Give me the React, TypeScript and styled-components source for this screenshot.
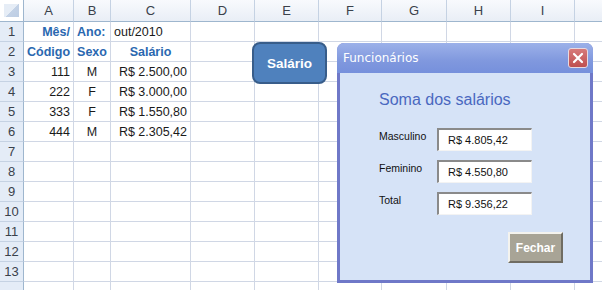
import styled, { createGlobalStyle } from 'styled-components';

const GlobalStyle = createGlobalStyle`
  html, body {
    margin: 0;
    padding: 0;
    background: #ffffff;
  }
  * {
    box-sizing: border-box;
  }
`;

const COLS = [24, 50, 37, 80, 64, 64, 63, 65, 64, 64, 64];
// the last column (J) is cut by the window, its letter falls outside
const LETTERS = ['A', 'B', 'C', 'D', 'E', 'F', 'G', 'H', 'I', ''];
const ROW_COUNT = 13;

type Align = 'left' | 'center' | 'right';

interface CellData {
  text: string;
  align?: Align;
  head?: boolean;
}

const data: Record<string, CellData> = {
  '1-0': { text: 'Mês/', align: 'right', head: true },
  '1-1': { text: 'Ano:', align: 'left', head: true },
  '1-2': { text: 'out/2010', align: 'left' },
  '2-0': { text: 'Código', align: 'center', head: true },
  '2-1': { text: 'Sexo', align: 'center', head: true },
  '2-2': { text: 'Salário', align: 'center', head: true },
  '3-0': { text: '111', align: 'right' },
  '3-1': { text: 'M', align: 'center' },
  '3-2': { text: 'R$ 2.500,00', align: 'right' },
  '4-0': { text: '222', align: 'right' },
  '4-1': { text: 'F', align: 'center' },
  '4-2': { text: 'R$ 3.000,00', align: 'right' },
  '5-0': { text: '333', align: 'right' },
  '5-1': { text: 'F', align: 'center' },
  '5-2': { text: 'R$ 1.550,80', align: 'right' },
  '6-0': { text: '444', align: 'right' },
  '6-1': { text: 'M', align: 'center' },
  '6-2': { text: 'R$ 2.305,42', align: 'right' },
};

const Page = styled.div`
  position: relative;
  width: 602px;
  height: 290px;
  overflow: hidden;
  font-family: 'Liberation Sans', Arial, sans-serif;
`;

const Sheet = styled.div`
  display: grid;
  grid-template-columns: ${COLS.map((c) => `${c}px`).join(' ')};
  grid-template-rows: 22px repeat(${ROW_COUNT + 1}, 20px);
`;

const Corner = styled.div`
  background: linear-gradient(135deg, #e6edf6 0%, #e6edf6 52%, #c3d2e6 52%, #b9cae2 100%);
  border-right: 1px solid #9eb6ce;
  border-bottom: 1px solid #9eb6ce;
  padding: 4px;
  background-clip: content-box;
  background-color: #dfe7f2;
`;

const ColHead = styled.div`
  display: flex;
  align-items: center;
  justify-content: center;
  background: linear-gradient(#f8fafd, #e9eef6);
  border-right: 1px solid #c5d2e3;
  border-bottom: 1px solid #9eb6ce;
  color: #3a414b;
  font-size: 13px;
`;

const RowHead = styled.div`
  display: flex;
  align-items: center;
  justify-content: center;
  background: #e4ecf7;
  border-right: 1px solid #9eb6ce;
  border-bottom: 1px solid #c5d2e3;
  color: #3a414b;
  font-size: 13px;
`;

const Cell = styled.div<{ $align: Align; $head: boolean }>`
  display: flex;
  align-items: center;
  justify-content: ${({ $align }) =>
    $align === 'right' ? 'flex-end' : $align === 'center' ? 'center' : 'flex-start'};
  padding: 0 3px;
  border-right: 1px solid #d0d7e5;
  border-bottom: 1px solid #d0d7e5;
  font-size: 12.5px;
  white-space: nowrap;
  overflow: visible;
  color: ${({ $head }) => ($head ? '#2a68b0' : '#1a1a1a')};
  font-weight: ${({ $head }) => ($head ? 700 : 400)};
`;

const ShapeButton = styled.div`
  position: absolute;
  left: 252px;
  top: 42px;
  width: 75px;
  height: 42px;
  display: flex;
  align-items: center;
  justify-content: center;
  background: #4f81bd;
  border: 2px solid #385d8a;
  border-radius: 8px;
  color: #ffffff;
  font-weight: 700;
  font-size: 13.5px;
`;

const Dialog = styled.div`
  position: absolute;
  left: 337px;
  top: 43px;
  width: 256px;
  height: 240px;
  display: flex;
  flex-direction: column;
  background: #6f78c8;
  border-radius: 7px 7px 0 0;
  padding: 0 3px 3px;
`;

const TitleBar = styled.div`
  height: 30px;
  display: flex;
  align-items: center;
  justify-content: space-between;
  margin: 0 -3px;
  padding: 0 5px 0 6px;
  border-radius: 7px 7px 0 0;
  background: linear-gradient(#9cb1e9, #8098de 60%, #7690dc);
  color: #ffffff;
  font-family: 'DejaVu Sans', Verdana, sans-serif;
  font-size: 12px;
`;

const CloseButton = styled.div`
  width: 20px;
  height: 20px;
  display: flex;
  align-items: center;
  justify-content: center;
  border: 1px solid #e8d9e0;
  border-radius: 3px;
  background: linear-gradient(#d77a7a, #bf4f4f);
`;

const Body = styled.div`
  flex: 1;
  display: flex;
  flex-direction: column;
  background: #d6e3f7;
  padding: 17px 27px 0 39px;
`;

const Heading = styled.div`
  color: #4a68c0;
  font-size: 16px;
  line-height: 20px;
  margin-bottom: 18px;
`;

const FieldList = styled.div`
  display: flex;
  flex-direction: column;
  gap: 9px;
`;

const FieldRow = styled.div`
  display: grid;
  grid-template-columns: 58px 95px;
  align-items: start;
`;

const Label = styled.div`
  font-size: 10.5px;
  color: #111111;
  padding-top: 2px;
`;

const ValueBox = styled.div`
  height: 23px;
  display: flex;
  align-items: center;
  padding-left: 9px;
  background: #ffffff;
  border-top: 2px solid #8a8a8a;
  border-left: 2px solid #8a8a8a;
  border-right: 1px solid #f3f3f3;
  border-bottom: 1px solid #f3f3f3;
  font-size: 11px;
  color: #111111;
`;

const Footer = styled.div`
  display: flex;
  justify-content: flex-end;
  margin-top: 17px;
`;

const FecharButton = styled.div`
  width: 55px;
  height: 31px;
  display: flex;
  align-items: center;
  justify-content: center;
  background: #a8a496;
  border-top: 2px solid #f4f3ee;
  border-left: 2px solid #f4f3ee;
  border-right: 2px solid #6f6c62;
  border-bottom: 2px solid #6f6c62;
  color: #ffffff;
  font-weight: 700;
  font-size: 12px;
`;

const fields = [
  { label: 'Masculino', value: 'R$ 4.805,42' },
  { label: 'Feminino', value: 'R$ 4.550,80' },
  { label: 'Total', value: 'R$ 9.356,22' },
];

export default function App() {
  const cells = [];
  cells.push(<Corner key="corner" />);
  COLS.slice(1).forEach((_, i) => {
    cells.push(<ColHead key={`h-${i}`}>{LETTERS[i] ?? ''}</ColHead>);
  });
  // one extra row at the bottom, cut by the window: no number shown
  for (let r = 1; r <= ROW_COUNT + 1; r++) {
    cells.push(<RowHead key={`r-${r}`}>{r <= ROW_COUNT ? r : ''}</RowHead>);
    COLS.slice(1).forEach((_, c) => {
      const d = data[`${r}-${c}`];
      cells.push(
        <Cell key={`${r}-${c}`} $align={d?.align ?? 'left'} $head={!!d?.head}>
          {d?.text}
        </Cell>
      );
    });
  }

  return (
    <Page>
      <GlobalStyle />
      <Sheet>{cells}</Sheet>
      <ShapeButton>Salário</ShapeButton>
      <Dialog>
        <TitleBar>
          <span>Funcionários</span>
          <CloseButton>
            <svg width="12" height="12" viewBox="0 0 12 12">
              <path d="M2 2 L10 10 M10 2 L2 10" stroke="#ffffff" strokeWidth="2.2" strokeLinecap="round" />
            </svg>
          </CloseButton>
        </TitleBar>
        <Body>
          <Heading>Soma dos salários</Heading>
          <FieldList>
            {fields.map((f) => (
              <FieldRow key={f.label}>
                <Label>{f.label}</Label>
                <ValueBox>{f.value}</ValueBox>
              </FieldRow>
            ))}
          </FieldList>
          <Footer>
            <FecharButton>Fechar</FecharButton>
          </Footer>
        </Body>
      </Dialog>
    </Page>
  );
}
